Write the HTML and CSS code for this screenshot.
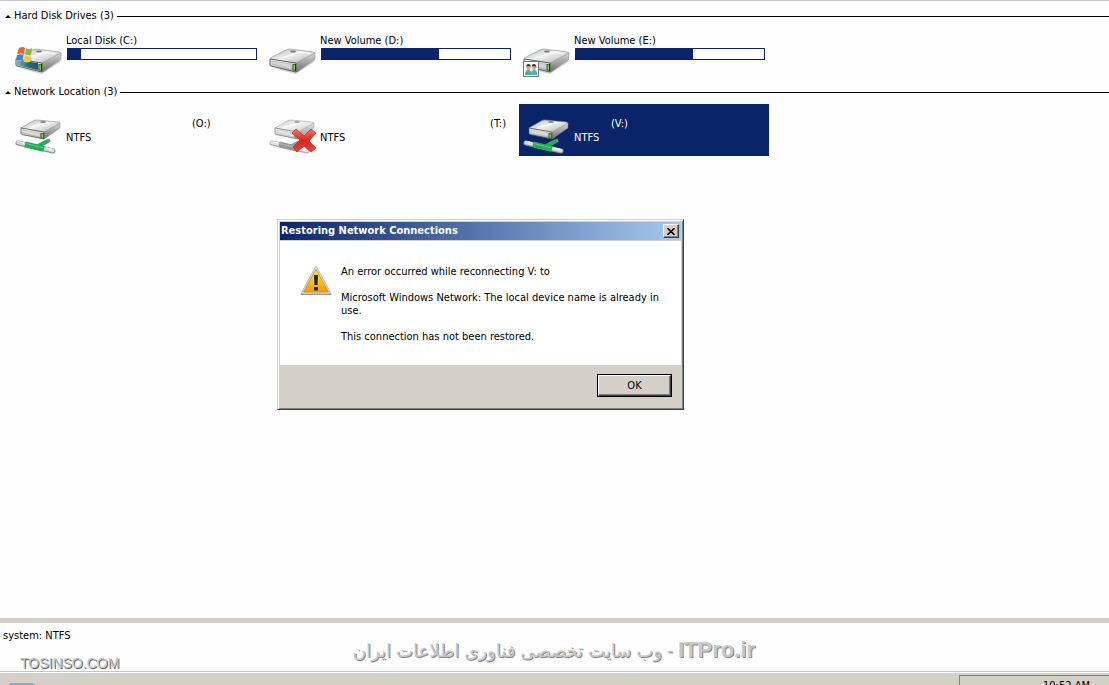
FILE: index.html
```html
<!DOCTYPE html>
<html lang="en">
<head>
  <meta charset="UTF-8">
  <title>Computer</title>
  <meta name="viewport" content="width=device-width, initial-scale=1.0">
  <link rel="stylesheet" href="styles.css">
</head>
<body>
  <!-- shared icon shapes -->
  <svg class="defs" width="0" height="0" aria-hidden="true">
    <defs>
      <linearGradient id="g-top" x1="0" y1="0" x2="1" y2="1">
        <stop offset="0" stop-color="#b4b4b4"/>
        <stop offset="0.45" stop-color="#f0f0f0"/>
        <stop offset="1" stop-color="#a8a8a8"/>
      </linearGradient>
      <linearGradient id="g-front" x1="0" y1="0" x2="0" y2="1">
        <stop offset="0" stop-color="#f8f8f8"/>
        <stop offset="1" stop-color="#a4a4a4"/>
      </linearGradient>
      <linearGradient id="g-side" x1="0" y1="0" x2="0" y2="1">
        <stop offset="0" stop-color="#d8d8d8"/>
        <stop offset="1" stop-color="#6c6c6c"/>
      </linearGradient>
      <linearGradient id="g-teal" x1="0" y1="0" x2="1" y2="0">
        <stop offset="0" stop-color="#7fb3bf"/>
        <stop offset="0.5" stop-color="#1f6f86"/>
        <stop offset="1" stop-color="#2b5560"/>
      </linearGradient>
      <linearGradient id="g-red" x1="0" y1="0" x2="0" y2="1">
        <stop offset="0" stop-color="#f5776c"/>
        <stop offset="0.5" stop-color="#dc241c"/>
        <stop offset="1" stop-color="#e8453a"/>
      </linearGradient>
      <linearGradient id="g-warn" x1="0" y1="0" x2="0" y2="1">
        <stop offset="0" stop-color="#fff24a"/>
        <stop offset="0.5" stop-color="#fbc51c"/>
        <stop offset="1" stop-color="#f09a08"/>
      </linearGradient>
      <symbol id="disk" viewBox="0 0 48 48">
        <path d="M4 40L28 46L46 34L47 31L28 42Z" fill="#000" opacity="0.18"/>
        <path d="M2 31Q2 30 4 29L18 22Q20 21 22 21L45 24Q47 24 47 26L28 36Z" fill="url(#g-top)" stroke="#8c8c8c" stroke-width="0.6"/>
        <path d="M28 35L47 25V31L29 44Q28 44 28 43Z" fill="url(#g-side)" stroke="#888" stroke-width="0.5"/>
        <path d="M2 31L28 35V44L3 38Q2 38 2 37Z" fill="url(#g-front)" stroke="#555" stroke-width="0.9"/>
        <path d="M4 33L24 36V41L4 36Z" fill="#d6d6d6" stroke="#aaa" stroke-width="0.5"/>
        <ellipse cx="25" cy="23.5" rx="3" ry="1" fill="#777"/>
        <path d="M13 30L32 24L42 26" fill="none" stroke="#fff" stroke-width="0.8"/>
        <path d="M24.6 36H28V43L24.6 42Z" fill="#223322"/>
        <path d="M25.2 36.6H27V42.2L25.2 41.6Z" fill="#52d82a"/>
      </symbol>
      <symbol id="net-disk" viewBox="0 0 48 48">
        <path d="M7 24L20 16.5Q21 16 23 16L44 18Q46 18 46 20L30 29Z" fill="url(#g-top)" stroke="#888" stroke-width="0.6"/>
        <path d="M30 28L46 19V24L30 35Z" fill="url(#g-side)" stroke="#888" stroke-width="0.5"/>
        <path d="M7 24L30 28V35L8 30.5Q7 30 7 29Z" fill="url(#g-front)" stroke="#555" stroke-width="0.8"/>
        <path d="M9 26L26 29V32.5L9 29Z" fill="#dcdcdc" stroke="#b0b0b0" stroke-width="0.5"/>
        <ellipse cx="29" cy="18" rx="3" ry="0.9" fill="#888"/>
        <path d="M16 23L35 18.5" stroke="#fff" stroke-width="0.9"/>
        <path d="M26.6 29H29.6V34.4L26.6 33.8Z" fill="#223322"/>
        <path d="M27.2 29.6H29V34L27.2 33.4Z" fill="#52d82a"/>
      </symbol>
      <symbol id="cable" viewBox="0 0 48 48" overflow="visible">
        <path d="M26 41L36 36" stroke="#7e8688" stroke-width="3.5"/>
        <path d="M24 42L34 37" stroke="currentColor" stroke-width="4"/>
        <path d="M4 39L39 47" stroke="#8a9294" stroke-width="5" stroke-linecap="round"/>
        <path d="M4 38.6L39 46.6" stroke="#d4dcdc" stroke-width="3.4" stroke-linecap="round"/>
        <path d="M11 40.4L30 44.8" stroke="currentColor" stroke-width="6"/>
        <path d="M12 39.6L29 43.6" stroke="#fff" stroke-opacity="0.3" stroke-width="1"/>
        <path d="M6 38L10 39M32 44L38 45.4" stroke="#fff" stroke-width="1.2"/>
      </symbol>
    </defs>
  </svg>

  <main class="files">
    <section class="group">
      <h2 class="group-title"><span class="arrow"></span>Hard Disk Drives (3)</h2>
      <div class="tiles">
        <div class="tile">
          <svg class="icon" viewBox="0 0 48 48" aria-hidden="true">
            <use href="#disk"/>
            <path d="M3 32L24 35V42L3 37Z" fill="url(#g-teal)"/>
            <path d="M5 20Q9 18 11 20L10 26Q7 25 3 26Z" fill="#e8642c"/>
            <path d="M12 20.500Q15 22 18 20L17 27Q14 28 11 26Z" fill="#86bd3c"/>
            <path d="M3 27Q7 25.500 9.500 27L8.500 33Q5 31 2 32.500Z" fill="#3f87d0"/>
            <path d="M11 27.500Q14 29 17 28L16 34Q12 35 9.500 33.500Z" fill="#fbc62e"/>
          </svg>
          <div class="info">
            <span class="name">Local Disk (C:)</span>
            <div class="bar"><div class="used" style="width: 7%"></div></div>
          </div>
        </div>
        <div class="tile">
          <svg class="icon" viewBox="0 0 48 48" aria-hidden="true"><use href="#disk"/></svg>
          <div class="info">
            <span class="name">New Volume (D:)</span>
            <div class="bar"><div class="used" style="width: 62%"></div></div>
          </div>
        </div>
        <div class="tile">
          <svg class="icon" viewBox="0 0 48 48" aria-hidden="true">
            <use href="#disk"/>
            <g transform="translate(0 1)">
              <rect x="1.500" y="32.500" width="15" height="15" fill="#f4fbfc" stroke="#6f8088"/>
              <path d="M3 46Q3 41 6.500 41Q9 41 9.500 46Z" fill="#4fa79a"/>
              <path d="M9 46Q9 41 12 41Q15 41 15.500 46Z" fill="#5ba9c4"/>
              <ellipse cx="6.500" cy="38.500" rx="2" ry="2.600" fill="#d9a878"/>
              <ellipse cx="12" cy="38.500" rx="2" ry="2.600" fill="#d9a878"/>
              <path d="M4.500 38Q4 35 6.500 35Q9 35 8.600 37.500L6 37ZM10 37.500Q9.500 35 12 35Q14.500 35 14.200 39L13 37Z" fill="#4a3322"/>
            </g>
          </svg>
          <div class="info">
            <span class="name">New Volume (E:)</span>
            <div class="bar"><div class="used" style="width: 62%"></div></div>
          </div>
        </div>
      </div>
    </section>

    <section class="group">
      <h2 class="group-title"><span class="arrow"></span>Network Location (3)</h2>
      <div class="tiles">
        <div class="tile network">
          <svg class="icon online" viewBox="0 0 48 48" aria-hidden="true"><use href="#cable"/><use href="#net-disk"/></svg>
          <div class="info">
            <span class="name middle">(O:)</span>
            <span>NTFS</span>
          </div>
        </div>
        <div class="tile network">
          <svg class="icon offline" viewBox="0 0 48 48" aria-hidden="true">
            <g opacity="0.75"><use href="#cable"/><use href="#net-disk"/></g>
            <path d="M28 25L36 32L43 25L48 29L41 37L48 44L43 48L36 42L29 48L25 43L32 36L24 29Z" fill="url(#g-red)" stroke="#b8201a" stroke-width="0.7"/>
          </svg>
          <div class="info">
            <span class="name end">(T:)</span>
            <span>NTFS</span>
          </div>
        </div>
        <div class="tile network selected">
          <svg class="icon online" viewBox="0 0 48 48" aria-hidden="true"><use href="#cable"/><use href="#net-disk"/></svg>
          <div class="info">
            <span class="name start">(V:)</span>
            <span>NTFS</span>
          </div>
        </div>
      </div>
    </section>
  </main>

  <section class="details">
    <p>system: NTFS</p>
    <div class="watermark site">TOSINSO.COM</div>
    <div class="watermark slogan" lang="fa" dir="rtl"><b>ITPro.ir</b> - وب سایت تخصصی فناوری اطلاعات ایران</div>
  </section>

  <footer class="taskbar">
    <svg class="task-icon" viewBox="0 0 28 20" aria-hidden="true">
      <path d="M1 1H24L27 4V20H1Z" fill="#b5dcf0" stroke="#3a87b8"/>
    </svg>
    <div class="tray"><time>10:52 AM</time></div>
  </footer>

  <div class="dialog" role="alertdialog" aria-labelledby="dialog-title">
    <header class="titlebar">
      <h1 id="dialog-title">Restoring Network Connections</h1>
      <button class="close" type="button" aria-label="Close">
        <svg viewBox="0 0 8 7" width="8" height="7"><path d="M0.500 0L7.500 7M7.500 0L0.500 7" stroke="#000" stroke-width="1.600"/></svg>
      </button>
    </header>
    <div class="dialog-body">
      <svg class="warning" viewBox="0 0 32 32" aria-hidden="true">
        <path d="M16 2.500L30.500 29H1.500Z" fill="#999" stroke="#999" stroke-width="2" stroke-linejoin="round"/>
        <path d="M16 2.500L30 28H2Z" fill="#e4e4e4" stroke="#d4d4d4" stroke-width="1.500" stroke-linejoin="round"/>
        <path d="M16 4.500L28.500 27H3.500Z" fill="url(#g-warn)" stroke="#d18c10" stroke-width="0.800"/>
        <path d="M14 10H18L17.500 20H14.500Z" fill="#222"/>
        <rect x="14" y="22" width="4" height="3.500" rx="1" fill="#222"/>
      </svg>
      <div class="message">
        <p>An error occurred while reconnecting V: to</p>
        <p>Microsoft Windows Network: The local device name is already in use.</p>
        <p>This connection has not been restored.</p>
      </div>
    </div>
    <div class="dialog-buttons">
      <button class="ok" type="button">OK</button>
    </div>
  </div>
</body>
</html>
```
FILE: styles.css
```css
* {
  box-sizing: border-box;
}

body {
  margin: 0;
  height: 100vh;
  display: flex;
  flex-direction: column;
  overflow: hidden;
  background: #fefefe;
  color: #000;
  font-family: "DejaVu Sans Condensed", "DejaVu Sans", sans-serif;
  font-size: 11px;
  line-height: 14px;
}

p,
h1,
h2 {
  margin: 0;
}

.defs {
  position: absolute;
}

.files {
  flex: 1;
  border-top: 1px solid #c8c8c8;
  padding-top: 8px;
}

.group-title {
  display: flex;
  align-items: center;
  gap: 3px;
  height: 14px;
  padding-left: 5px;
  font-size: 11px;
  font-weight: normal;
}

.group-title::after {
  content: "";
  flex: 1;
  height: 1px;
  background: #000;
}

.arrow {
  border: 3px solid transparent;
  border-top: 0;
  border-bottom-color: #000;
}

.tiles {
  display: flex;
  gap: 4px;
  padding: 5px 0 5px 11px;
}

.tile {
  display: flex;
  gap: 4px;
  width: 250px;
  height: 52px;
  padding-left: 3px;
}

.icon {
  width: 48px;
  height: 48px;
  flex: none;
  overflow: visible;
}

.online {
  color: #1fae52;
}

.offline {
  color: #777;
}

.info {
  flex: 1;
  display: flex;
  flex-direction: column;
  padding-top: 6px;
}

.network .info {
  padding-top: 13px;
}

.bar {
  width: 190px;
  height: 12px;
  margin: 0 1px;
  border: 1px solid #0a246a;
  background: #fff;
}

.used {
  height: 100%;
  background: #0a246a;
}

.selected {
  background: #0a246a;
  color: #fff;
}

.start {
  padding-left: 37px;
}

.middle {
  padding-left: 126px;
}

.end {
  padding-right: 9px;
  text-align: right;
}

.details {
  position: relative;
  height: 53px;
  padding: 6px 3px;
  border-top: 5px solid #d4d0c8;
}

.watermark {
  position: absolute;
  font-family: "Liberation Sans", "DejaVu Sans", sans-serif;
  white-space: nowrap;
}

.site {
  left: 20px;
  top: 33px;
  font-size: 14px;
  color: #c4c4c4;
  text-shadow: 1px 1px 0 #666;
}

.slogan {
  right: 354px;
  top: 15px;
  font-size: 18px;
  line-height: 24px;
  color: #c8c8c8;
  text-shadow: 1px 1px 0 #888;
}

.slogan b {
  font-size: 22px;
}

.taskbar {
  display: flex;
  justify-content: space-between;
  height: 14px;
  padding-left: 9px;
  background: #d4d0c8;
  border-top: 1px solid #c8c5be;
  box-shadow: inset 0 1px 0 #fff;
}

.task-icon {
  width: 28px;
  height: 20px;
  margin-top: 11px;
}

.tray {
  width: 150px;
  height: 28px;
  margin-top: 3px;
  padding: 3px 19px;
  border-top: 1px solid #808080;
  border-left: 1px solid #808080;
  text-align: right;
}

.dialog {
  position: absolute;
  left: 277px;
  top: 219px;
  width: 407px;
  padding: 1px;
  background: #d4d0c8;
  border: 1px solid;
  border-color: #d4d0c8 #404040 #404040 #d4d0c8;
  box-shadow: inset 1px 1px 0 #fff, inset -1px -1px 0 #808080;
}

.titlebar {
  display: flex;
  align-items: center;
  justify-content: space-between;
  height: 18px;
  margin: 1px;
  padding: 0 2px 0 1px;
  background: linear-gradient(to right, #0a246a, #a6caf0);
}

.titlebar h1 {
  color: #fff;
  font-size: 11px;
}

.close,
.ok {
  padding: 0;
  background: #d4d0c8;
  border: 1px solid;
  border-color: #fff #404040 #404040 #fff;
  box-shadow: inset -1px -1px 0 #808080;
}

.close {
  display: flex;
  align-items: center;
  justify-content: center;
  width: 16px;
  height: 14px;
}

.dialog-body {
  display: flex;
  gap: 9px;
  height: 124px;
  margin: 0 1px;
  padding: 24px 16px 0 20px;
  background: #fff;
}

.warning {
  width: 32px;
  height: 32px;
  flex: none;
}

.message {
  display: flex;
  flex-direction: column;
  gap: 13px;
  line-height: 13px;
}

.dialog-buttons {
  display: flex;
  justify-content: flex-end;
  padding: 9px 10px 11px;
}

.ok {
  width: 75px;
  height: 23px;
  outline: 1px solid #000;
  outline-offset: -1px;
  border-width: 2px;
  font: inherit;
}
```
